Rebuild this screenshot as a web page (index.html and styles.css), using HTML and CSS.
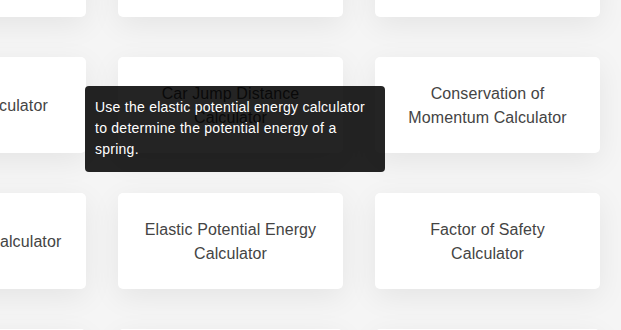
FILE: index.html
```html
<!DOCTYPE html>
<html lang="en">
<head>
    <meta charset="UTF-8">
    <meta name="viewport" content="width=device-width, initial-scale=1.0">
    <title>Physics Calculators</title>
    <link rel="stylesheet" href="styles.css">
</head>
<body>
    <div class="grid">
        <a class="card" href="#"><span>Angular Momentum Calculator</span></a>
        <a class="card" href="#"><span>Buoyancy Force Calculator</span></a>
        <a class="card" href="#"><span>Center of Mass Calculator</span></a>

        <a class="card" href="#"><span>Buoyancy Calculator</span></a>
        <a class="card" href="#"><span>Car Jump Distance Calculator</span></a>
        <a class="card" href="#"><span>Conservation of Momentum Calculator</span></a>

        <a class="card" href="#"><span>Displacement Calculator</span></a>
        <a class="card" href="#"><span>Elastic Potential Energy Calculator</span></a>
        <a class="card" href="#"><span>Factor of Safety Calculator</span></a>

        <a class="card" href="#"><span>Free Fall Calculator</span></a>
        <a class="card" href="#"><span>Friction Calculator</span></a>
        <a class="card" href="#"><span>Gravitational Force Calculator</span></a>
    </div>

    <div class="tooltip">
        Use the elastic potential energy calculator to determine the potential energy of a spring.
    </div>
</body>
</html>
```

FILE: styles.css
```css
body {
    font-family: "Liberation Sans", Arial, sans-serif;
    margin: 0;
    background-color: #f5f5f5;
    overflow: hidden;
}
.grid {
    display: grid;
    grid-template-columns: repeat(3, 225px);
    grid-auto-rows: 96px;
    column-gap: 32px;
    row-gap: 40px;
    margin: -79px 0 0 -139px;
}
.card {
    display: flex;
    align-items: center;
    justify-content: center;
    padding: 2px 24px 0;
    background-color: #fff;
    border-radius: 5px;
    box-shadow: 0 8px 30px rgba(0, 0, 0, 0.07);
    color: #444;
    font-size: 16px;
    line-height: 24px;
    letter-spacing: 0.1px;
    text-align: center;
    text-decoration: none;
}
.tooltip {
    position: absolute;
    left: 85px;
    top: 86px;
    width: 300px;
    box-sizing: border-box;
    padding: 11px 12px 12px 10px;
    background-color: rgba(0, 0, 0, 0.86);
    border-radius: 4px;
    color: #fff;
    font-size: 14px;
    line-height: 21px;
    letter-spacing: 0.25px;
}
```
